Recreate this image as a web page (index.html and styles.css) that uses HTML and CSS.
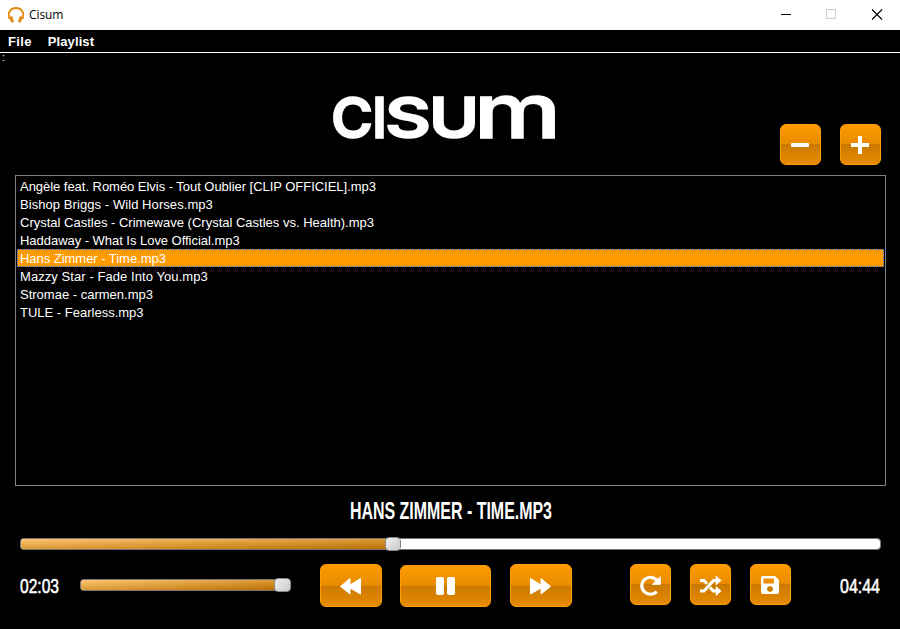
FILE: index.html
```html
<!DOCTYPE html>
<html lang="en">
<head>
<meta charset="utf-8">
<title>Cisum</title>
<link rel="stylesheet" href="styles.css">
</head>
<body>
<header class="titlebar">
  <svg class="app-icon" width="16" height="16" viewBox="0 0 16 16"><path d="M1.500 12C-1 5 3 1 8 1s9 4 6.500 11" fill="none" stroke="#e08a10" stroke-width="1.800"/><path d="M2 9.800l2.200-.8 1.800 6-2.200.8C2.600 15 1.400 12 2 9.800zM14 9.800l-2.200-.8-1.800 6 2.200.8c1.200-.8 2.400-3.800 1.800-6z" fill="#e08a10"/></svg>
  <span class="app-name">Cisum</span>
  <svg class="window-controls" width="110" height="30" viewBox="0 0 110 30" fill="none" shape-rendering="crispEdges"><path d="M1 14.500h10" stroke="#000"/><rect x="46.500" y="9.500" width="9" height="9" stroke="#ccc"/><path d="M92 9.500l10 10M102 9.500l-10 10" stroke="#000" shape-rendering="auto" stroke-width="1.1"/></svg>
</header>
<nav class="menu"><span class="file">File</span><span class="playlist">Playlist</span></nav>
<section class="brand">
  <span class="marker">:</span>
  <svg class="logo" width="230" height="50" viewBox="0 0 230 50" role="img" aria-label="Cisum">
    <text class="cap" x="-1" y="45" textLength="42" lengthAdjust="spacingAndGlyphs">C</text>
    <text class="cap" x="40" y="45" textLength="15" lengthAdjust="spacingAndGlyphs">I</text>
    <text class="cap" x="53" y="45" textLength="46" lengthAdjust="spacingAndGlyphs">S</text>
    <text class="cap" x="97" y="45" textLength="50" lengthAdjust="spacingAndGlyphs">U</text>
    <text class="low" x="142" y="45" textLength="87" lengthAdjust="spacingAndGlyphs">m</text>
  </svg>
  <div class="list-actions">
    <button class="button square" aria-label="Remove"><svg width="41" height="41" viewBox="0 0 41 41"><rect x="11" y="19" width="18" height="4" rx="1" fill="#fff"/></svg></button>
    <button class="button square" aria-label="Add"><svg width="41" height="41" viewBox="0 0 41 41"><path d="M11 21h18M20 12v18" stroke="#fff" stroke-width="4"/></svg></button>
  </div>
</section>
<ul class="tracks">
  <li class="tight"><span>Angèle feat. Roméo Elvis - Tout Oublier [CLIP OFFICIEL].mp3</span></li>
  <li class="loose"><span>Bishop Briggs - Wild Horses.mp3</span></li>
  <li><span>Crystal Castles - Crimewave (Crystal Castles vs. Health).mp3</span></li>
  <li class="tight"><span>Haddaway - What Is Love Official.mp3</span></li>
  <li class="selected tight"><span>Hans Zimmer - Time.mp3</span></li>
  <li class="loose"><span>Mazzy Star - Fade Into You.mp3</span></li>
  <li><span>Stromae - carmen.mp3</span></li>
  <li><span>TULE - Fearless.mp3</span></li>
</ul>
<svg class="now-playing" width="900" height="52"><text x="350" y="33" textLength="202" lengthAdjust="spacingAndGlyphs">HANS ZIMMER - TIME.MP3</text></svg>
<div class="slider progress"><i class="fill"></i><i class="knob"></i></div>
<footer class="controls">
  <svg class="time" width="60" height="44"><text x="0" y="29" textLength="39" lengthAdjust="spacingAndGlyphs">02:03</text></svg>
  <div class="slider volume"><i class="fill"></i><i class="knob"></i></div>
  <div class="transport">
    <button class="button skip" aria-label="Previous"><svg width="62" height="43" viewBox="0 0 62 43"><path d="M20.500 22.500L30 14.500v6.500L40.500 14.500V30L30 24V30z" fill="#fff" stroke="#fff" stroke-linejoin="round"/></svg></button>
    <button class="button pause" aria-label="Pause"><svg width="91" height="42" viewBox="0 0 91 42"><path d="M38 12h4q2 0 2 2v14q0 2-2 2h-4q-2 0-2-2V14q0-2 2-2zM49 12h4q2 0 2 2v14q0 2-2 2h-4q-2 0-2-2V14q0-2 2-2z" fill="#fff"/></svg></button>
    <button class="button skip" aria-label="Next"><svg width="62" height="43" viewBox="0 0 62 43"><path d="M40.500 22.500L31 14.500v6.500L20.500 14.500V30L31 24V30z" fill="#fff" stroke="#fff" stroke-linejoin="round"/></svg></button>
  </div>
  <div class="modes">
    <button class="button square" aria-label="Repeat"><svg width="41" height="41" viewBox="0 0 41 41" fill="none"><path d="M26.600 27.500A8.500 8.500 0 1 1 27 16.500" stroke="#fff" stroke-width="3.200"/><path d="M30.500 12.500v8H22z" fill="#fff" stroke="#fff" stroke-width=".7" stroke-linejoin="round"/></svg></button>
    <button class="button square" aria-label="Shuffle"><svg width="41" height="41" viewBox="0 0 41 41" fill="none"><path d="M10 27h4l9.500-10.500h3M10 16.500h4l3 3.300M20 23.500l3.200 3.500h3.300" stroke="#fff" stroke-width="3"/><path d="M26 12l5.200 4.500L26 21zM26 22.500l5.200 4.500-5.200 4.500z" fill="#fff" stroke="#fff" stroke-width=".6"/></svg></button>
    <button class="button square" aria-label="Save"><svg width="41" height="41" viewBox="0 0 41 41"><path fill="#fff" fill-rule="evenodd" d="M13 12h12l4 4v12q0 2-2 2H13q-2 0-2-2V14q0-2 2-2zm.5 2.500v5h10.500v-5zM20 22a3 3 0 1 0 .01 0z"/></svg></button>
  </div>
  <svg class="time total" width="45" height="44"><text x="0" y="29" textLength="40" lengthAdjust="spacingAndGlyphs">04:44</text></svg>
</footer>
</body>
</html>
```
FILE: styles.css
```css
* { box-sizing: border-box; }
body { margin: 0; width: 900px; height: 629px; overflow: hidden; background: #000; color: #fff; font-family: "Liberation Sans", sans-serif; }
svg { display: block; }
.titlebar { height: 30px; background: #fff; color: #000; display: flex; align-items: center; padding: 0 10px 0 8px; }
.app-name { margin: -1px 0 0 5px; font: 12px "Open Sans", "Noto Sans", sans-serif; letter-spacing: -.1px; }
.window-controls { margin-left: auto; }
.menu { height: 23px; border-bottom: 1px solid #fff; padding-left: 8px; display: flex; gap: 16px; font-weight: bold; font-size: 13px; line-height: 23px; }
.playlist { letter-spacing: .1px; }
.file { letter-spacing: .35px; }
.brand { height: 122px; display: flex; align-items: flex-start; }
.marker { width: 332px; padding-left: 2px; font-size: 10px; line-height: 9px; }
.logo { margin-top: 40px; fill: #fff; stroke: #fff; stroke-width: 1.6px; font-family: Inter, sans-serif; overflow: visible; }
.cap { font-size: 57px; font-weight: 600; }
.low { font-size: 75px; font-weight: 500; }
.list-actions { display: flex; gap: 19px; margin: 71px 0 0 218px; }
.button { border: 1px solid #ff9c08; border-radius: 6px; padding: 0; display: grid; place-items: center; background: linear-gradient(#ff9b00, #e78b00 50%, #ca7900 50%, #e78b00); flex: none; }
.button svg { margin: -1px; }
.square { width: 41px; height: 41px; }
.tracks { list-style: none; margin: 0 14px 0 15px; height: 311px; padding: 1px; border: 1px solid #7d808a; font-size: 13px; line-height: 20px; }
.tracks li { height: 18px; padding-left: 3px; white-space: nowrap; }
.tracks .tight { letter-spacing: -.035px; }
.tracks .loose { letter-spacing: .07px; }
.tracks .selected { background: #ff9b00; outline: 1px dotted #1764ca; outline-offset: -1px; }
.now-playing text { font: bold 23px "Liberation Sans Narrow", "Liberation Sans", sans-serif; fill: #fff; }
.slider { position: relative; height: 12px; border: 1px solid #777; border-radius: 4px; background: #fff; display: flex; }
.progress { width: 861px; margin-left: 20px; }
.fill { background: linear-gradient(to bottom right, #ffc670, #b86e00); border-radius: 3px 0 0 3px; width: 368px; }
.knob { position: absolute; left: 364px; top: -2px; width: 16px; height: 14px; border: 1px solid #888; border-radius: 4px; background: linear-gradient(135deg, #eee, #ccc); }
.controls { display: flex; margin: 14px 0 0 20px; }
.time text { font: 21px "Liberation Sans Narrow", "Liberation Sans", sans-serif; fill: #fff; stroke: #fff; stroke-width: .6px; }
.volume { width: 211px; margin: 15px 29px 0 0; }
.volume .fill { width: 200px; }
.volume .knob { left: 193px; width: 17px; }
.transport { display: flex; gap: 18px; align-items: flex-start; }
.skip { width: 62px; height: 43px; }
.pause { width: 91px; height: 42px; margin: 1px 1px 0 0; }
.modes { display: flex; gap: 19px; margin-left: 58px; }
.total { margin-left: 49px; }
```
